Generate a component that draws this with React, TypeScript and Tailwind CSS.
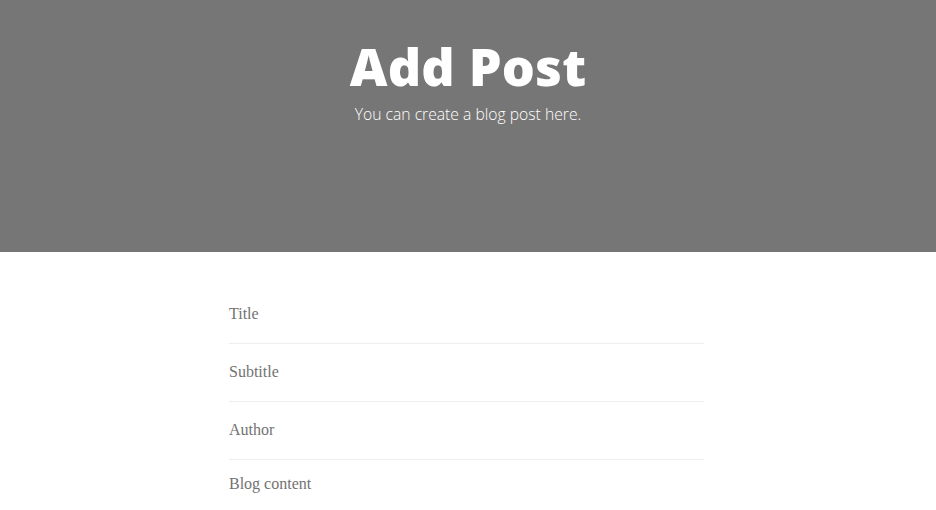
// Add Post page: gray masthead + underlined floating-label style fields

const FIELDS = ["Title", "Subtitle", "Author"];

export default function App() {
  return (
    <div className="min-h-[510px] bg-white">
      {/* ── Masthead ─────────────────────────────────────────── */}
      <header className="h-[252px] bg-[#767676] flex flex-col items-center pt-[36px] text-white font-['Open_Sans',sans-serif]">
        <h1 className="text-[52px] leading-[60px] font-extrabold tracking-[0.2px]">Add Post</h1>
        <p className="mt-[6px] text-[15.7px] leading-6 font-light">You can create a blog post here.</p>
      </header>

      {/* ── Form ─────────────────────────────────────────────── */}
      <form className="mx-auto w-[478px] pr-[3px] pt-[34px] font-['Liberation_Serif',serif] text-[16px] text-[#727272]">
        {FIELDS.map((label) => (
          <div key={label} className="h-[58px] flex items-center pb-[2px] border-b border-[#eeeeee]">
            <span>{label}</span>
          </div>
        ))}
        <div className="pt-[12px] h-[50px]">
          <span>Blog content</span>
        </div>
      </form>
    </div>
  );
}
